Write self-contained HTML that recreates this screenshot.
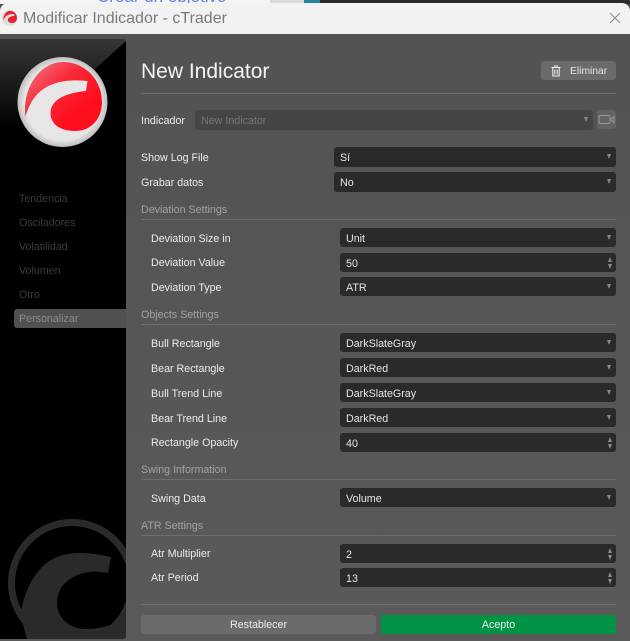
<!DOCTYPE html>
<html><head><meta charset="utf-8"><style>
html,body{margin:0;padding:0;background:#555}
#p{position:relative;width:630px;height:641px;overflow:hidden;background:linear-gradient(#525252,#5a5a5a);font-family:"Liberation Sans",Arial,sans-serif;font-size:10.7px;color:#eaeaea}
#p div{position:absolute;white-space:nowrap}
.l{left:151px;line-height:14px;color:#ececec;margin-top:1px}
.l0{left:141px}
.s{left:340px;width:276px;height:19px;line-height:22px;background:#2a2a2a;border-radius:3px;text-indent:6px;color:#e6e6e6}
.s0{left:334px;width:282px;height:20px;line-height:22px;text-indent:6px}
.s:after,.u:after{content:"";position:absolute;right:5px;top:7px;border-left:2.5px solid transparent;border-right:2.5px solid transparent;border-top:5px solid #8a8a8a}
.n:after{content:"";position:absolute;right:4px;top:11px;border-left:2.5px solid transparent;border-right:2.5px solid transparent;border-top:5px solid #8a8a8a}
.n:before{content:"";position:absolute;right:4px;top:4px;border-left:2.5px solid transparent;border-right:2.5px solid transparent;border-bottom:5px solid #8a8a8a}
.h{left:141px;line-height:14px;color:#a2a2a2;margin-top:1px}
.r{left:141px;width:475px;height:1px;background:#6e6e6e}
.nav{left:19px;color:#3a3a3a;line-height:14px;margin-top:1px}
</style></head><body><div id="p">
<div style="left:0;top:0;width:630px;height:4px;background:#f4f4f4;overflow:hidden">
<div style="left:97px;top:-12px;font-size:17px;line-height:17px;color:#5f86dc">Crear un objetivo</div>
<div style="left:270px;top:0;width:34px;height:4px;background:#d9d9d9"></div>
<div style="left:304px;top:0;width:16px;height:4px;background:#2b7f9e"></div>
<div style="left:320px;top:0;width:310px;height:4px;background:#2a2a2a"></div>
</div>
<div style="left:0;top:3px;width:630px;height:31px;background:#f2f2f2;border-radius:8px 8px 0 0"></div>
<svg style="position:absolute;left:2px;top:10px" width="16" height="16" viewBox="17 57 91 91"><circle cx="62.5" cy="102" r="45" fill="#ddd"/><path d="M25.5 117C22 88 40 62 63 62C85 62 102 80 102 102C102 118 92 131 75 131C60 131 50.5 124 50.5 113C50.5 100 65 93 86 91L87.5 81C60 78 34 84 25.5 117Z" fill="#e8202a"/></svg>
<div style="left:23px;top:10px;font-size:16px;line-height:18px;color:#7a7a7a">Modificar Indicador - cTrader</div>
<svg style="position:absolute;left:609px;top:12px" width="12" height="12"><path d="M1 1L11 11M11 1L1 11" stroke="#8a8a8a" stroke-width="1" fill="none"/></svg>

<svg style="position:absolute;left:0;top:39px" width="127" height="600" viewBox="0 39 127 600">
<defs>
<clipPath id="c"><path d="M0 39H122Q126 39 126 43V635Q126 639 122 639H0Z"/></clipPath>
<linearGradient id="g" x1="0" y1="39" x2="0" y2="130" gradientUnits="userSpaceOnUse"><stop offset="0" stop-color="#363636"/><stop offset="1" stop-color="#000"/></linearGradient>
<linearGradient id="rd" x1="30" y1="65" x2="75" y2="115" gradientUnits="userSpaceOnUse"><stop offset="0" stop-color="#f2707c"/><stop offset=".5" stop-color="#f82a3a"/><stop offset="1" stop-color="#ff0f1e"/></linearGradient>
<radialGradient id="gr" cx="62.5" cy="102" r="45" gradientUnits="userSpaceOnUse"><stop offset=".85" stop-color="#e6e6e6"/><stop offset="1" stop-color="#bdbdbd"/></radialGradient>
</defs>
<g clip-path="url(#c)">
<rect x="0" y="39" width="127" height="600" fill="#000"/>
<path d="M0 39H126V41L0 155Z" fill="url(#g)"/>
<circle cx="62.5" cy="102" r="45" fill="url(#gr)"/>
<path d="M25.5 117C22 88 40 62 63 62C85 62 102 80 102 102C102 118 92 131 75 131C60 131 50.5 124 50.5 113C50.5 100 65 93 86 91L87.5 81C60 78 34 84 25.5 117Z" fill="url(#rd)"/>
<circle cx="72" cy="583" r="60.5" fill="none" stroke="#2a2a2a" stroke-width="7"/>
<path d="M21 612C25 590 33 576 43 566C53 557 65 553 80 553C92 553 102 555 111 557L108 573C102 572 96 571 90 572C72 574 57 585 57 603C57 618 70 629 85 629C100 629 115 625 126 617V639H27C24 630 22 620 21 612Z" fill="#2a2a2a"/>
</g></svg>

<div class="nav" style="top:191px">Tendencia</div>
<div class="nav" style="top:215px">Osciladores</div>
<div class="nav" style="top:239px">Volatilidad</div>
<div class="nav" style="top:263px">Volumen</div>
<div class="nav" style="top:287px">Otro</div>
<div style="left:14px;top:309px;width:112px;height:19px;background:#505050;border-radius:3px 0 0 3px"></div>
<div class="nav" style="top:311px;color:#8c8c8c">Personalizar</div>

<div style="left:141px;top:59px;font-size:21px;line-height:26px;color:#f4f4f4">New Indicator</div>
<div style="left:541px;top:61px;width:75px;height:19px;background:#6b6b6b;border-radius:3px"></div>
<svg style="position:absolute;left:550px;top:65px" width="12" height="12" viewBox="0 0 12 12"><path d="M1.5 2.5H10.5M4 1H8M2.8 3V11H9.2V3M4.8 4.5V9.5M7.2 4.5V9.5" stroke="#f0f0f0" stroke-width="1" fill="none"/></svg>
<div style="left:570px;top:64px;line-height:15px;font-size:10.3px;color:#e6e6e6">Eliminar</div>
<div class="r" style="top:93px"></div>

<div class="l l0" style="top:113px">Indicador</div>
<div class="u" style="left:195px;top:110px;width:398px;height:20px;line-height:22px;background:#454545;border-radius:3px;text-indent:6px;color:#777">New Indicator</div>
<div style="left:597px;top:110px;width:19px;height:19px;background:#626262;border-radius:3px"></div>
<svg style="position:absolute;left:598px;top:114px" width="17" height="12" viewBox="0 0 17 12"><rect x="1" y="1.5" width="11" height="8" rx="1.5" fill="none" stroke="#9a9a9a"/><path d="M12.5 5.5L16 2.5V8.5Z" fill="none" stroke="#9a9a9a"/></svg>

<div class="l l0" style="top:150px">Show Log File</div>
<div class="s s0" style="top:147px">Sí</div>
<div class="l l0" style="top:175px">Grabar datos</div>
<div class="s s0" style="top:172px">No</div>

<div class="h" style="top:202px">Deviation Settings</div><div class="r" style="top:219px"></div>
<div class="l" style="top:231px">Deviation Size in</div><div class="s" style="top:228px">Unit</div>
<div class="l" style="top:255px">Deviation Value</div><div class="s n" style="top:253px">50</div>
<div class="l" style="top:280px">Deviation Type</div><div class="s" style="top:277px">ATR</div>

<div class="h" style="top:307px">Objects Settings</div><div class="r" style="top:324px"></div>
<div class="l" style="top:336px">Bull Rectangle</div><div class="s" style="top:333px">DarkSlateGray</div>
<div class="l" style="top:361px">Bear Rectangle</div><div class="s" style="top:358px">DarkRed</div>
<div class="l" style="top:386px">Bull Trend Line</div><div class="s" style="top:383px">DarkSlateGray</div>
<div class="l" style="top:411px">Bear Trend Line</div><div class="s" style="top:408px">DarkRed</div>
<div class="l" style="top:435px">Rectangle Opacity</div><div class="s n" style="top:433px">40</div>

<div class="h" style="top:462px">Swing Information</div><div class="r" style="top:479px"></div>
<div class="l" style="top:491px">Swing Data</div><div class="s" style="top:488px">Volume</div>

<div class="h" style="top:518px">ATR Settings</div><div class="r" style="top:535px"></div>
<div class="l" style="top:546px">Atr Multiplier</div><div class="s n" style="top:544px">2</div>
<div class="l" style="top:570px">Atr Period</div><div class="s n" style="top:568px">13</div>

<div class="r" style="top:604px"></div>
<div style="left:141px;top:615px;width:235px;height:19px;line-height:21px;background:#6b6b6b;border-radius:3px;text-align:center;color:#ededed">Restablecer</div>
<div style="left:381px;top:615px;width:235px;height:19px;line-height:21px;background:#009345;border-radius:2px;text-align:center;color:#e4f4ea">Acepto</div>
</div></body></html>
